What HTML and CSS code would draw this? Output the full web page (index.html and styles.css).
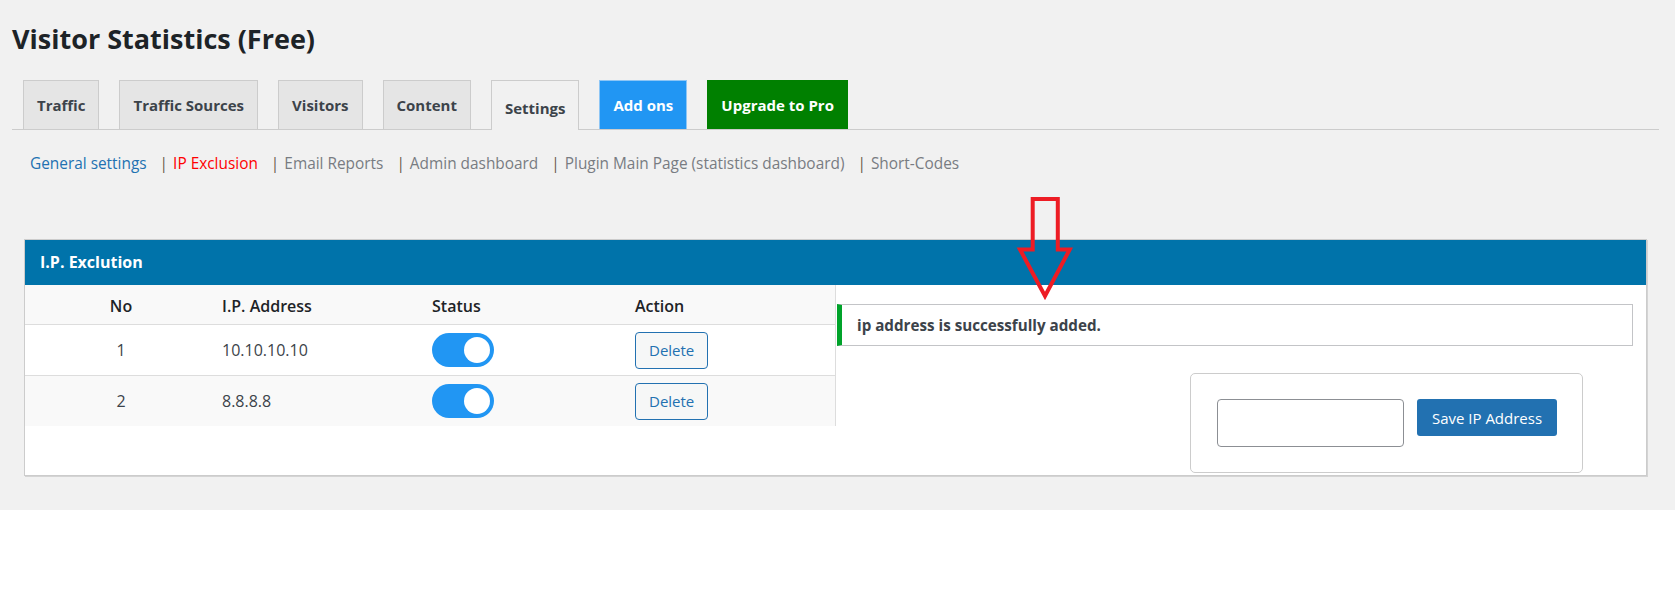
FILE: index.html
```html
<!DOCTYPE html>
<html lang="en">

<head>
    <meta charset="UTF-8">
    <title>Visitor Statistics (Free)</title>
    <link rel="stylesheet" href="styles.css">
</head>

<body>
    <div class="wrap">
        <h1 class="page-title">Visitor Statistics (Free)</h1>

        <nav class="nav-tabs">
            <a class="nav-tab" href="#">Traffic</a>
            <a class="nav-tab" href="#">Traffic Sources</a>
            <a class="nav-tab" href="#">Visitors</a>
            <a class="nav-tab" href="#">Content</a>
            <a class="nav-tab active" href="#">Settings</a>
            <a class="nav-tab addons" href="#">Add ons</a>
            <a class="nav-tab upgrade" href="#">Upgrade to Pro</a>
        </nav>

        <div class="subnav">
            <a class="sub-link general" href="#">General settings</a><span class="sep">|</span>
            <a class="sub-link current" href="#">IP Exclusion</a><span class="sep">|</span>
            <a class="sub-link" href="#">Email Reports</a><span class="sep">|</span>
            <a class="sub-link" href="#">Admin dashboard</a><span class="sep">|</span>
            <a class="sub-link" href="#">Plugin Main Page (statistics dashboard)</a><span class="sep">|</span>
            <a class="sub-link" href="#">Short-Codes</a>
        </div>

        <div class="panel">
            <div class="panel-head">I.P. Exclution</div>
            <div class="panel-body">
                <div class="ip-table">
                    <div class="ip-row ip-head">
                        <span class="col-no">No</span>
                        <span>I.P. Address</span>
                        <span>Status</span>
                        <span>Action</span>
                    </div>
                    <div class="ip-row">
                        <span class="col-no">1</span>
                        <span>10.10.10.10</span>
                        <span><label class="switch"><input type="checkbox" checked><span class="slider"></span></label></span>
                        <span><button class="btn-delete" type="button">Delete</button></span>
                    </div>
                    <div class="ip-row">
                        <span class="col-no">2</span>
                        <span>8.8.8.8</span>
                        <span><label class="switch"><input type="checkbox" checked><span class="slider"></span></label></span>
                        <span><button class="btn-delete" type="button">Delete</button></span>
                    </div>
                </div>

                <div class="side">
                    <div class="notice">ip address is successfully added.</div>
                    <form class="add-form">
                        <input class="ip-input" type="text">
                        <button class="btn-save" type="button">Save IP Address</button>
                    </form>
                </div>
            </div>
        </div>

        <!-- red callout arrow pointing at the notice -->
        <svg class="arrow" width="58" height="108" viewBox="0 0 58 108">
            <polygon points="16.7,5 41.8,5 41.8,55.5 53.7,55.5 29,102 4,55.5 16.7,55.5" fill="none" stroke="#ed1c24" stroke-width="4"/>
        </svg>
    </div>
</body>
</html>
```

FILE: styles.css
```css
body {
    margin: 0;
    background: #fff;
    font-family: "Open Sans", "Noto Sans", sans-serif;
    color: #3c434a;
}

.wrap {
    position: relative;
    background: #f1f1f1;
    padding: 0 16px 34px 12px;
    overflow: hidden;
}

.page-title {
    margin: 22px 0 0 0;
    font-size: 27px;
    line-height: 34px;
    font-weight: 700;
    color: #1d2327;
}

/* top tabs */
.nav-tabs {
    display: flex;
    gap: 20px;
    margin-top: 24px;
    padding-left: 11px;
    border-bottom: 1px solid #ccc;
}

.nav-tab {
    box-sizing: border-box;
    height: 49px;
    display: flex;
    align-items: center;
    padding: 0 13px;
    border: 1px solid #ccc;
    border-bottom: 0;
    background: #e5e5e5;
    color: #3c434a;
    font-size: 15px;
    font-weight: 700;
    text-decoration: none;
}

.nav-tab.active {
    height: 50px;
    margin-bottom: -1px;
    padding-top: 4px;
    background: #f1f1f1;
}

.nav-tab.addons {
    background: #2196f3;
    border-color: #8ec6f5;
    color: #fff;
}

.nav-tab.upgrade {
    background: #008000;
    border-color: #008000;
    color: #fff;
}

/* settings sub links */
.subnav {
    margin-top: 24px;
    padding-left: 18px;
    font-size: 15.4px;
    line-height: 20px;
}

.sub-link {
    color: #787c82;
    text-decoration: none;
}

.sub-link.general {
    color: #2271b1;
}

.sub-link.current {
    color: #f00;
}

.sep {
    display: inline-block;
    margin: 0 1px 0 13px;
    color: #6b5a4a;
}

/* exclusion panel */
.panel {
    margin: 65px 12px 0 12px;
    border: 1px solid #ccc;
    box-shadow: 1px 1px 0 #d4d4d4;
    background: #fff;
}

.panel-head {
    height: 45px;
    line-height: 45px;
    padding-left: 15px;
    background: #0073aa;
    color: #fff;
    font-size: 16px;
    font-weight: 700;
}

.panel-body {
    display: flex;
    align-items: flex-start;
    padding-bottom: 2px;
}

.ip-table {
    width: 810px;
    border-right: 1px solid #ddd;
    font-size: 16px;
}

.ip-row {
    display: grid;
    grid-template-columns: 192px 210px 203px 1fr;
    align-items: center;
    height: 51px;
    box-sizing: border-box;
    border-bottom: 1px solid #ddd;
    background: #fff;
}

.ip-row:nth-child(odd) {
    background: #f9f9f9;
}

.ip-row:last-child {
    height: 50px;
    border-bottom: 0;
}

.ip-row > span {
    padding-left: 5px;
}

.ip-row > .col-no {
    padding-left: 0;
    text-align: center;
}

.ip-head {
    height: 40px;
    padding-top: 2px;
    font-weight: 600;
    color: #1d2327;
}

/* toggle switch */
.switch {
    position: relative;
    display: block;
    width: 62px;
    height: 34px;
}

.switch input {
    opacity: 0;
    width: 0;
    height: 0;
}

.slider {
    position: absolute;
    inset: 0;
    background: #ccc;
    border-radius: 34px;
}

.slider:before {
    content: "";
    position: absolute;
    left: 4px;
    bottom: 4px;
    width: 26px;
    height: 26px;
    border-radius: 50%;
    background: #fff;
}

.switch input:checked + .slider {
    background: #2196f3;
}

.switch input:checked + .slider:before {
    transform: translateX(28px);
}

.btn-delete {
    display: block;
    height: 37px;
    padding: 0 13px;
    border: 1px solid #2271b1;
    border-radius: 4px;
    background: #f6f7f7;
    color: #2271b1;
    font-family: inherit;
    font-size: 15px;
}

/* right column */
.side {
    flex: 1;
    display: flex;
    flex-direction: column;
}

.notice {
    margin: 19px 13px 0 1px;
    height: 42px;
    box-sizing: border-box;
    border: 1px solid #c3c4c7;
    border-left: 5px solid #00a32a;
    padding-left: 15px;
    line-height: 40px;
    font-size: 15.2px;
    font-weight: 700;
    color: #3c434a;
}

.add-form {
    align-self: flex-end;
    display: flex;
    align-items: flex-start;
    gap: 13px;
    margin: 27px 63px 0 0;
    padding: 25px 25px 25px 26px;
    border: 1px solid #ccc;
    border-radius: 5px;
}

.ip-input {
    box-sizing: border-box;
    width: 187px;
    height: 48px;
    margin: 0;
    border: 1px solid #8c8f94;
    border-radius: 4px;
    background: #fff;
}

.btn-save {
    width: 140px;
    height: 37px;
    border: 0;
    border-radius: 3px;
    background: #2271b1;
    color: #fff;
    font-family: inherit;
    font-size: 15px;
}

.arrow {
    position: absolute;
    left: 1016px;
    top: 194px;
}
```
